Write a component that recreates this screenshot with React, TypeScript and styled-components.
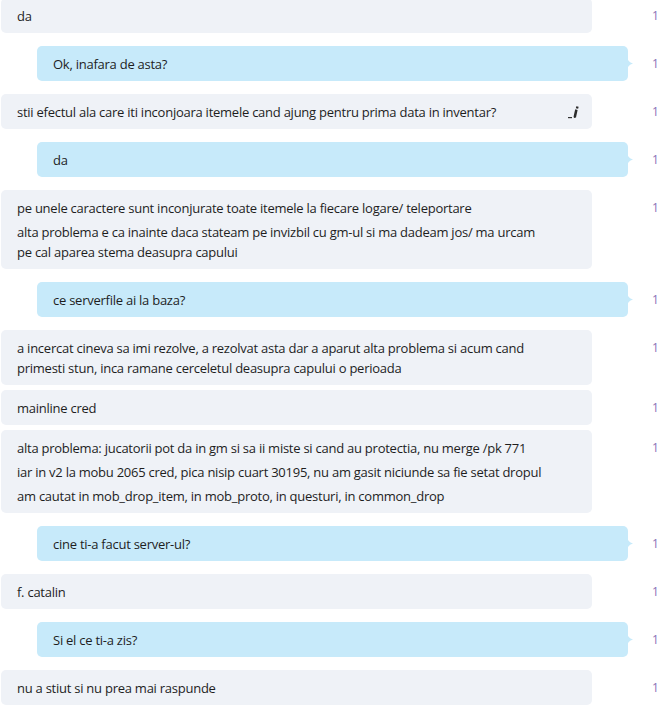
import React from 'react';
import styled, { createGlobalStyle } from 'styled-components';

const GlobalStyle = createGlobalStyle`
  html, body {
    margin: 0;
    padding: 0;
    background: #ffffff;
    overflow: hidden;
  }
  body {
    font-family: "Open Sans", "Noto Sans", "DejaVu Sans", sans-serif;
  }
`;

const Thread = styled.div`
  width: 659px;
  height: 705px;
  overflow: hidden;
  padding-left: 1px;
  box-sizing: border-box;
`;

const List = styled.div`
  margin-top: -2px;
  display: flex;
  flex-direction: column;
`;

const Row = styled.div<{ $grouped: boolean }>`
  display: flex;
  align-items: flex-start;
  margin-top: ${p => (p.$grouped ? '5px' : '13px')};
  &:first-child {
    margin-top: 0;
  }
`;

const MessageCol = styled.div`
  width: 627px;
  flex: none;
  display: flex;
`;

const Bubble = styled.div<{ $mine: boolean }>`
  position: relative;
  box-sizing: border-box;
  width: 591px;
  margin-left: ${p => (p.$mine ? '36px' : '0')};
  padding: 8px 12px 7px 16px;
  border-radius: 5px;
  background: ${p => (p.$mine ? '#c7eafa' : '#eff2f7')};
  color: #1e1e1e;
  font-size: 13px;
  letter-spacing: -0.25px;
  line-height: 20px;
  display: flex;
  align-items: flex-start;
  ${p =>
    p.$mine &&
    `
    &::after {
      content: '';
      position: absolute;
      right: -5px;
      top: 50%;
      width: 6px;
      height: 14px;
      margin-top: -7px;
      background: #c7eafa;
      clip-path: path('M0 0 Q0.5 5.5 6 7 Q0.5 8.5 0 14 Z');
    }
  `}
`;

const Body = styled.div`
  flex: 1;
  display: flex;
  flex-direction: column;
  gap: 4px;
`;

const Para = styled.div`
  white-space: pre-wrap;
`;

const EditMark = styled.span`
  flex: none;
  display: inline-flex;
  align-items: center;
  height: 20px;
  margin-left: 8px;
`;

const Count = styled.div`
  margin-left: 24px;
  padding-top: 8px;
  font-size: 12px;
  line-height: 20px;
  color: #8a72b8;
`;

type Msg = {
  mine: boolean;
  paras: string[];
  edited?: boolean;
  grouped?: boolean;
};

const messages: Msg[] = [
  { mine: false, paras: ['da'] },
  { mine: true, paras: ['Ok, inafara de asta?'] },
  {
    mine: false,
    paras: ['stii efectul ala care iti inconjoara itemele cand ajung pentru prima data in inventar?'],
    edited: true,
  },
  { mine: true, paras: ['da'] },
  {
    mine: false,
    paras: [
      'pe unele caractere sunt inconjurate toate itemele la fiecare logare/ teleportare',
      'alta problema e ca inainte daca stateam pe invizbil cu gm-ul si ma dadeam jos/ ma urcam\npe cal aparea stema deasupra capului',
    ],
  },
  { mine: true, paras: ['ce serverfile ai la baza?'] },
  {
    mine: false,
    paras: [
      'a incercat cineva sa imi rezolve, a rezolvat asta dar a aparut alta problema si acum cand\nprimesti stun, inca ramane cerceletul deasupra capului o perioada',
    ],
  },
  { mine: false, paras: ['mainline cred'], grouped: true },
  {
    mine: false,
    grouped: true,
    paras: [
      'alta problema: jucatorii pot da in gm si sa ii miste si cand au protectia, nu merge /pk 771',
      'iar in v2 la mobu 2065 cred, pica nisip cuart 30195, nu am gasit niciunde sa fie setat dropul',
      'am cautat in mob_drop_item, in mob_proto, in questuri, in common_drop',
    ],
  },
  { mine: true, paras: ['cine ti-a facut server-ul?'] },
  { mine: false, paras: ['f. catalin'] },
  { mine: true, paras: ['Si el ce ti-a zis?'] },
  { mine: false, paras: ['nu a stiut si nu prea mai raspunde'] },
];

const PencilIcon = () => (
  <svg width="12" height="14" viewBox="0 0 12 14">
    <rect x="0" y="12" width="4" height="1.2" fill="#333" />
    <path d="M7.2 4.2 L9.6 4.9 L8 12.4 L6 13 L5.6 11.5 Z" fill="#2b2b2b" />
    <path d="M8.3 1.2 L10.6 1.8 L10.1 3.8 L7.8 3.2 Z" fill="#2b2b2b" />
  </svg>
);

export default function App() {
  return (
    <>
      <GlobalStyle />
      <Thread>
        <List>
          {messages.map((m, i) => (
            <Row key={i} $grouped={!!m.grouped}>
              <MessageCol>
                <Bubble $mine={m.mine}>
                  <Body>
                    {m.paras.map((p, j) => (
                      <Para key={j}>{p}</Para>
                    ))}
                  </Body>
                  {m.edited && (
                    <EditMark>
                      <PencilIcon />
                    </EditMark>
                  )}
                </Bubble>
              </MessageCol>
              <Count>1</Count>
            </Row>
          ))}
        </List>
      </Thread>
    </>
  );
}
